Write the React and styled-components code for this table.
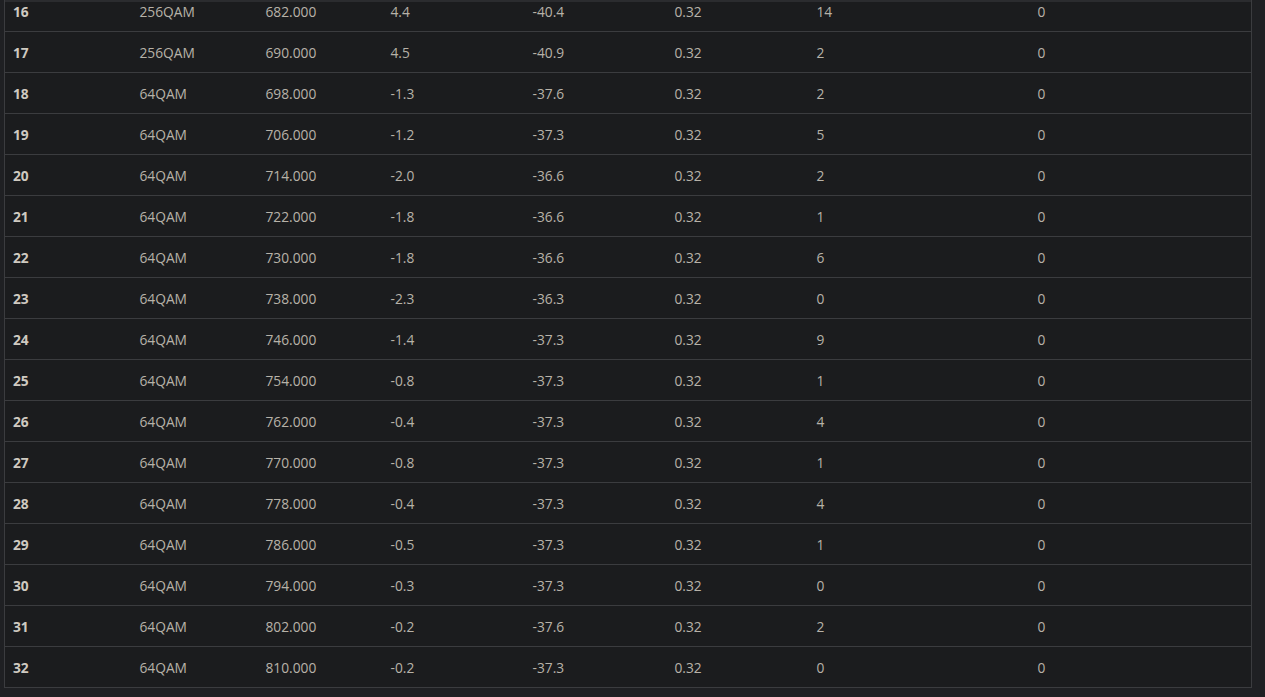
import React from "react";
import styled, { createGlobalStyle } from "styled-components";

const GlobalStyle = createGlobalStyle`
  html, body {
    margin: 0;
    padding: 0;
    background: #1f2023;
    overflow: hidden;
  }
`;

const Page = styled.div`
  position: relative;
  padding: 0 14px 0 4px;
  height: 697px;
  box-sizing: border-box;
  background: #1f2023;
  overflow: hidden;
`;

/* edge of the sticky header that sits just above the visible rows */
const HeaderEdge = styled.div`
  position: absolute;
  top: 0;
  left: 5px;
  width: 1246px;
  height: 2px;
  background: #2b2c2f;
  z-index: 1;
`;

const Scroller = styled.div`
  margin-top: -10px;
`;

const Table = styled.table`
  width: 1247px;
  border-collapse: collapse;
  table-layout: fixed;
  background: #1b1c1e;
  border: 1px solid #3b3c3f;
  font-family: "Open Sans", "Noto Sans", sans-serif;
  font-size: 13.75px;
  color: #b7b2a8;
`;

const Row = styled.tr`
  height: 41px;
  border-top: 1px solid #3b3c3f;
`;

const Cell = styled.td`
  padding: 1px 9px 0 ${(p) => (p.$head ? "8px" : "9px")};
  vertical-align: middle;
  white-space: nowrap;
  font-weight: ${(p) => (p.$head ? 700 : 400)};
  color: ${(p) => (p.$head ? "#cfcac1" : "#b7b2a8")};
`;

const widths = [126, 126, 125, 142, 142, 142, 221, 223];

const rows = [
  [16, "256QAM", "682.000", "4.4", "-40.4", "0.32", "14", "0"],
  [17, "256QAM", "690.000", "4.5", "-40.9", "0.32", "2", "0"],
  [18, "64QAM", "698.000", "-1.3", "-37.6", "0.32", "2", "0"],
  [19, "64QAM", "706.000", "-1.2", "-37.3", "0.32", "5", "0"],
  [20, "64QAM", "714.000", "-2.0", "-36.6", "0.32", "2", "0"],
  [21, "64QAM", "722.000", "-1.8", "-36.6", "0.32", "1", "0"],
  [22, "64QAM", "730.000", "-1.8", "-36.6", "0.32", "6", "0"],
  [23, "64QAM", "738.000", "-2.3", "-36.3", "0.32", "0", "0"],
  [24, "64QAM", "746.000", "-1.4", "-37.3", "0.32", "9", "0"],
  [25, "64QAM", "754.000", "-0.8", "-37.3", "0.32", "1", "0"],
  [26, "64QAM", "762.000", "-0.4", "-37.3", "0.32", "4", "0"],
  [27, "64QAM", "770.000", "-0.8", "-37.3", "0.32", "1", "0"],
  [28, "64QAM", "778.000", "-0.4", "-37.3", "0.32", "4", "0"],
  [29, "64QAM", "786.000", "-0.5", "-37.3", "0.32", "1", "0"],
  [30, "64QAM", "794.000", "-0.3", "-37.3", "0.32", "0", "0"],
  [31, "64QAM", "802.000", "-0.2", "-37.6", "0.32", "2", "0"],
  [32, "64QAM", "810.000", "-0.2", "-37.3", "0.32", "0", "0"],
];

export default function App() {
  return (
    <>
      <GlobalStyle />
      <Page>
        <HeaderEdge />
        <Scroller>
          <Table>
            <colgroup>
              {widths.map((w, i) => (
                <col key={i} style={{ width: w }} />
              ))}
            </colgroup>
            <tbody>
              {rows.map((r) => (
                <Row key={r[0]}>
                  {r.map((v, i) => (
                    <Cell key={i} $head={i === 0}>
                      {v}
                    </Cell>
                  ))}
                </Row>
              ))}
            </tbody>
          </Table>
        </Scroller>
      </Page>
    </>
  );
}
